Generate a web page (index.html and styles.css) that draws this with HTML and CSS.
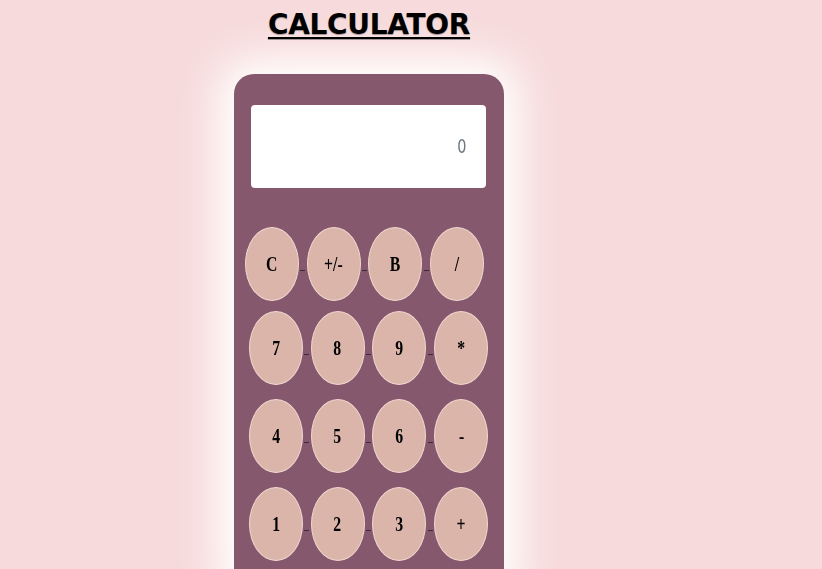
FILE: index.html
```html
<!DOCTYPE html>
<html>
<head>
<meta charset="utf-8">
<link rel="stylesheet" href="styles.css">
</head>
<body>
<div class="wrap">
  <h1 class="title">CALCULATOR</h1>
  <div class="calc">
    <div class="display"><span class="value">0</span></div>
    <div class="row row-first">
      <div class="key"><span>C</span></div><span class="sep"></span>
      <div class="key"><span>+/-</span></div><span class="sep"></span>
      <div class="key"><span>B</span></div><span class="sep"></span>
      <div class="key"><span>/</span></div>
    </div>
    <div class="row">
      <div class="key"><span>7</span></div><span class="sep"></span>
      <div class="key"><span>8</span></div><span class="sep"></span>
      <div class="key"><span>9</span></div><span class="sep"></span>
      <div class="key"><span>*</span></div>
    </div>
    <div class="row">
      <div class="key"><span>4</span></div><span class="sep"></span>
      <div class="key"><span>5</span></div><span class="sep"></span>
      <div class="key"><span>6</span></div><span class="sep"></span>
      <div class="key"><span>-</span></div>
    </div>
    <div class="row">
      <div class="key"><span>1</span></div><span class="sep"></span>
      <div class="key"><span>2</span></div><span class="sep"></span>
      <div class="key"><span>3</span></div><span class="sep"></span>
      <div class="key"><span>+</span></div>
    </div>
  </div>
</div>
</body>
</html>
```

FILE: styles.css
```css
html, body {
  margin: 0;
  padding: 0;
  background: #f7dbdc;
  overflow: hidden;
  height: 569px;
}
.wrap {
  width: 270px;
  margin-left: 234px;
}
.title {
  margin: 0;
  padding-top: 9px;
  height: 74px;
  box-sizing: border-box;
  text-align: center;
  font-family: "DejaVu Sans", sans-serif;
  font-weight: bold;
  font-size: 28px;
  line-height: 32px;
  color: #000;
  text-decoration: underline;
  text-decoration-thickness: 2px;
  text-underline-offset: 3px;
  text-shadow: 0 1px 1px rgba(0,0,0,0.35);
  letter-spacing: -0.3px;
}
.calc {
  background: #85586e;
  border-radius: 20px;
  height: 520px;
  box-shadow: 0 0 40px 16px #fff;
  padding-top: 31px;
  box-sizing: border-box;
}
.display {
  margin-left: 17px;
  width: 235px;
  height: 83px;
  background: #fff;
  border-radius: 4px;
  display: flex;
  align-items: center;
  justify-content: flex-end;
  padding-right: 19px;
  box-sizing: border-box;
}
.value {
  font-family: "DejaVu Sans Condensed", "DejaVu Sans", sans-serif;
  font-size: 20px;
  color: #6f7880;
  display: inline-block;
  transform: scaleX(0.8);
  margin-top: -2px;
}
.row {
  display: flex;
  align-items: center;
  margin-left: 15px;
  margin-top: 14px;
}
.row-first {
  margin-left: 11px;
  margin-top: 39px;
  margin-bottom: -4px;
}
.key {
  width: 54px;
  height: 74px;
  box-sizing: border-box;
  border-radius: 50%;
  background: #dcb5aa;
  border: 1.5px solid #efd6cf;
  display: flex;
  align-items: center;
  justify-content: center;
  flex: none;
}
.key span {
  font-family: "Liberation Serif", "Times New Roman", serif;
  font-weight: bold;
  font-size: 21px;
  color: #000;
  display: inline-block;
  transform: scaleX(0.75);
}
.sep {
  width: 7.7px;
  flex: none;
  height: 1px;
  margin-top: 12px;
  display: flex;
  justify-content: center;
}
.sep::before {
  content: "";
  width: 5px;
  height: 1px;
  background: #3a2a33;
}
```
